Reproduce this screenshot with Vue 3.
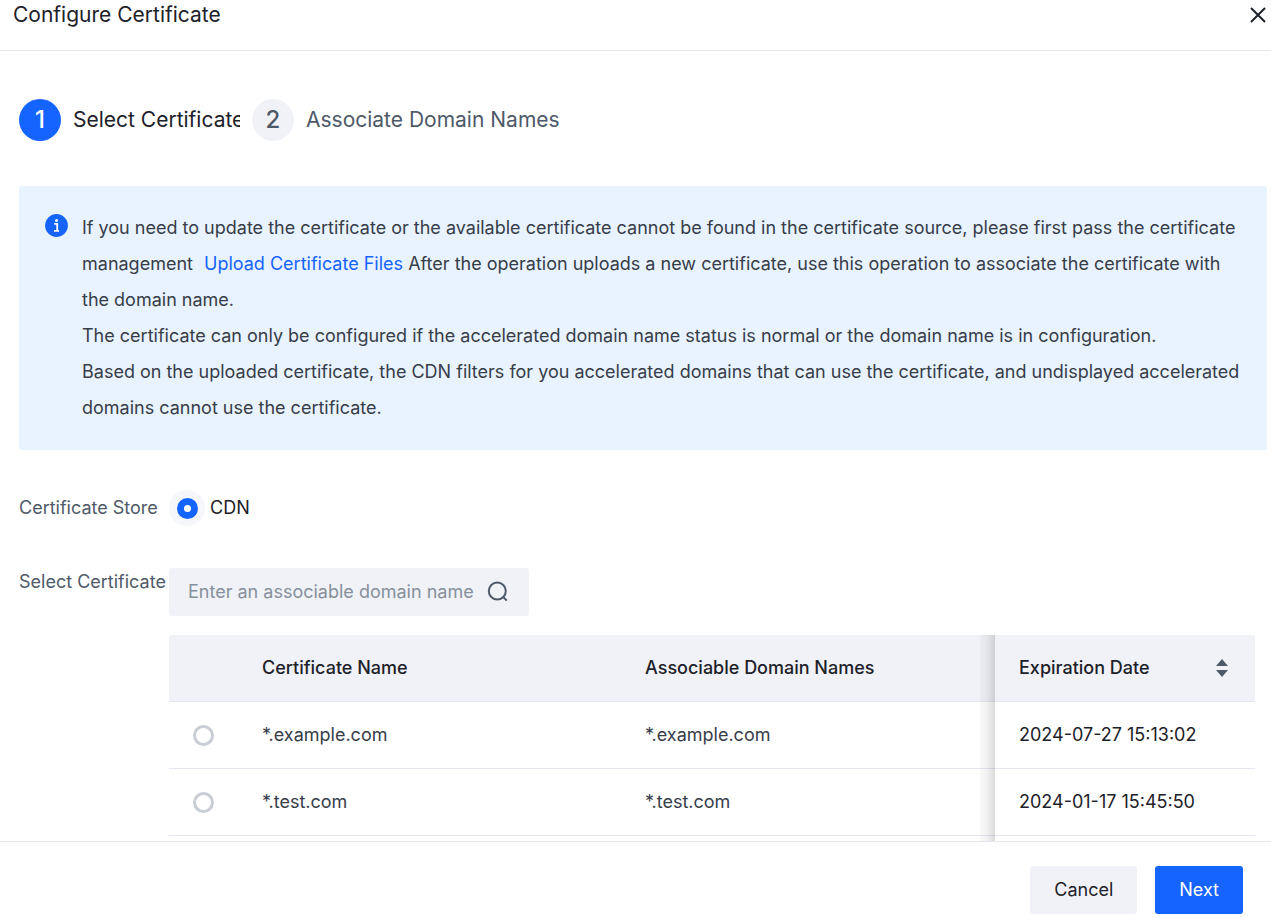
<script setup>
import { ref } from 'vue'

const store = ref('cdn')
const keyword = ref('')
const selected = ref('')
const rows = [
  { name: '*.example.com', domain: '*.example.com', expires: '2024-07-27 15:13:02' },
  { name: '*.test.com', domain: '*.test.com', expires: '2024-01-17 15:45:50' }
]
</script>

<template>
  <div class="dialog" role="dialog" aria-labelledby="dialog-title">
    <header class="head">
      <h1 id="dialog-title">Configure Certificate</h1>
      <button class="close" type="button" aria-label="Close">
        <svg width="18" height="18" viewBox="0 0 18 18" fill="none" stroke="currentColor" stroke-width="2">
          <path d="M2 2L16 16M16 2L2 16" />
        </svg>
      </button>
    </header>

    <main class="body">
      <ol class="steps">
        <li class="step active">
          <span class="num">1</span>
          <span class="label">Select Certificate</span>
        </li>
        <li class="step">
          <span class="num">2</span>
          <span class="label">Associate Domain Names</span>
        </li>
      </ol>

      <section class="alert">
        <svg class="info" width="23" height="23" viewBox="0 0 23 23">
          <circle cx="11.5" cy="11.5" r="11.4" fill="#1664ff" />
          <circle cx="11.5" cy="6.6" r="1.5" fill="#fff" />
          <path d="M9.2 9.9h3v6.6M9 16.8h5" fill="none" stroke="#fff" stroke-width="1.8" />
        </svg>
        <div class="alert-text">
          <p>
            If you need to update the certificate or the available certificate cannot be found in the
            certificate source, please first pass the certificate management
            <a href="#">Upload Certificate Files</a>
            After the operation uploads a new certificate, use this operation to associate the
            certificate with the domain name.
          </p>
          <p>The certificate can only be configured if the accelerated domain name status is normal or the domain name is in configuration.</p>
          <p>Based on the uploaded certificate, the CDN filters for you accelerated domains that can use the certificate, and undisplayed accelerated domains cannot use the certificate.</p>
        </div>
      </section>

      <div class="field store">
        <span class="field-label">Certificate Store</span>
        <label class="choice">
          <span class="halo"><input v-model="store" type="radio" name="store" value="cdn" /></span>
          CDN
        </label>
      </div>

      <div class="field certificates">
        <label class="field-label" for="search">Select Certificate</label>
        <div class="field-main">
          <div class="search">
            <input id="search" v-model="keyword" type="text" placeholder="Enter an associable domain name" />
            <button type="button" aria-label="Search">
              <svg width="24" height="24" viewBox="0 0 24 24" fill="none" stroke="currentColor" stroke-width="2">
                <circle cx="11.3" cy="11" r="8.5" />
                <path d="M17.2 17L20.8 20.6" />
              </svg>
            </button>
          </div>

          <div class="table-wrap">
            <table>
              <colgroup>
                <col class="col-pick" />
                <col class="col-name" />
                <col />
                <col class="col-date" />
              </colgroup>
              <thead>
                <tr>
                  <th></th>
                  <th>Certificate Name</th>
                  <th>Associable Domain Names</th>
                  <th>
                    <div class="sortable">
                      Expiration Date
                      <button type="button" aria-label="Sort by expiration date">
                        <svg width="12" height="18" viewBox="0 0 12 18" fill="currentColor">
                          <path d="M6 0L12 7H0zM6 18L0 11H12z" />
                        </svg>
                      </button>
                    </div>
                  </th>
                </tr>
              </thead>
              <tbody>
                <tr v-for="row in rows" :key="row.name">
                  <td><input v-model="selected" type="radio" name="certificate" :value="row.name" :aria-label="row.name" /></td>
                  <td>{{ row.name }}</td>
                  <td>{{ row.domain }}</td>
                  <td class="date">{{ row.expires }}</td>
                </tr>
              </tbody>
            </table>
          </div>
        </div>
      </div>
    </main>

    <footer class="foot">
      <button class="btn" type="button">Cancel</button>
      <button class="btn primary" type="button">Next</button>
    </footer>
  </div>
</template>

<style>
body {
  margin: 0;
  background: #fff;
}
</style>

<style scoped>
* {
  box-sizing: border-box;
}
.dialog {
  display: flex;
  flex-direction: column;
  height: 100vh;
  overflow: hidden;
  color: #1d2129;
  font: 400 18px/28px Inter, "Liberation Sans", sans-serif;
}
button {
  padding: 0;
  border: 0;
  background: none;
  color: inherit;
  font: inherit;
  cursor: pointer;
}
.head {
  display: flex;
  flex: none;
  justify-content: space-between;
  align-items: flex-start;
  height: 51px;
  padding: 0 4px 0 13px;
  border-bottom: 1px solid #e5e6ef;
}
h1 {
  margin: 0;
  font-size: 21px;
  font-weight: 400;
  line-height: 30px;
}
.close {
  display: flex;
  padding: 6px 0;
}
.body {
  display: flex;
  flex: 1;
  flex-direction: column;
  min-height: 0;
  overflow: hidden;
  padding: 48px 4px 0 19px;
}
.steps {
  display: flex;
  flex: none;
  gap: 12px;
  margin: 0 0 45px;
  padding: 0;
  list-style: none;
}
.step {
  display: flex;
  align-items: center;
  gap: 12px;
  color: #4e5969;
  font-size: 21px;
}
.step.active {
  width: 221px;
  color: #1d2129;
}
.num {
  flex: none;
  width: 42px;
  height: 42px;
  border-radius: 50%;
  background: #f1f2f8;
  font-size: 24px;
  font-weight: 500;
  line-height: 42px;
  text-align: center;
}
.active .num {
  background: #1664ff;
  color: #fff;
}
.label {
  overflow: hidden;
  white-space: nowrap;
}
.alert {
  display: flex;
  flex: none;
  gap: 14px;
  padding: 24px 24px 24px 26px;
  border-radius: 3px;
  background: #e8f3ff;
}
.info {
  flex: none;
  margin-top: 4px;
}
.alert-text {
  color: #373d49;
  line-height: 36px;
}
p {
  margin: 0;
}
a {
  margin-left: 6px;
  color: #1664ff;
  text-decoration: none;
}
.field {
  display: flex;
  flex: none;
}
.field-label {
  flex: none;
  width: 150px;
  color: #4e5969;
  white-space: nowrap;
}
.store {
  align-items: center;
  margin-top: 40px;
}
.choice {
  display: flex;
  align-items: center;
  gap: 5px;
}
.halo {
  display: grid;
  width: 36px;
  height: 36px;
  place-items: center;
  border-radius: 50%;
  background: #f6f7fb;
}
input[type='radio'] {
  display: block;
  width: 21px;
  height: 21px;
  margin: 0;
  appearance: none;
  border: 3px solid #c9cdd4;
  border-radius: 50%;
  background: #fff;
}
input[type='radio']:checked {
  border: 7px solid #1664ff;
}
.certificates {
  flex: 1;
  margin-top: 42px;
  padding-right: 12px;
}
.field-main {
  display: flex;
  flex: 1;
  flex-direction: column;
  min-width: 0;
}
.search {
  display: flex;
  flex: none;
  align-items: center;
  width: 360px;
  height: 48px;
  padding: 0 19px;
  border-radius: 3px;
  background: #f1f2f8;
}
.search input {
  flex: 1;
  min-width: 0;
  padding: 0;
  border: 0;
  outline: 0;
  background: none;
  color: #1d2129;
  font: inherit;
}
.search input::placeholder {
  color: #86909c;
  opacity: 1;
}
.search button {
  display: flex;
  color: #4e5969;
}
.table-wrap {
  position: relative;
  flex: 1;
  margin-top: 19px;
}
.table-wrap::after {
  position: absolute;
  top: 0;
  right: 260px;
  bottom: 0;
  width: 15px;
  background: linear-gradient(to left, rgba(0, 0, 0, 0.14), rgba(0, 0, 0, 0.06) 50%, rgba(0, 0, 0, 0.02));
  content: '';
}
table {
  width: 100%;
  border-spacing: 0;
  table-layout: fixed;
}
.col-pick {
  width: 69px;
}
.col-name {
  width: 383px;
}
.col-date {
  width: 260px;
}
th,
td {
  height: 67px;
  padding: 0 24px;
  border-bottom: 1px solid #e5e6ef;
  text-align: left;
}
th {
  background: #f1f2f8;
  font-weight: 500;
}
th:first-child {
  border-top-left-radius: 3px;
}
td {
  color: #373d49;
}
.date {
  color: #1d2129;
}
.sortable {
  display: flex;
  align-items: center;
  justify-content: space-between;
}
.sortable button {
  display: flex;
  margin-right: 3px;
  color: #4e5969;
}
.foot {
  display: flex;
  flex: none;
  justify-content: flex-end;
  gap: 18px;
  padding: 24px 28px 3px;
  border-top: 1px solid #e5e6ef;
}
.btn {
  height: 48px;
  padding: 0 24px;
  border-radius: 3px;
  background: #f1f2f8;
}
.btn.primary {
  background: #1664ff;
  color: #fff;
}
</style>
